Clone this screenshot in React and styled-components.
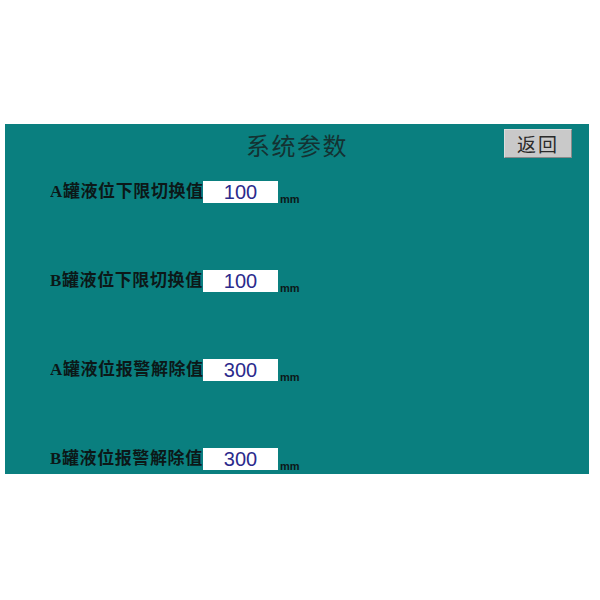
import React from "react";
import styled, { createGlobalStyle } from "styled-components";

const Global = createGlobalStyle`
  html, body { margin: 0; padding: 0; background: #ffffff; }
  body { font-family: "Liberation Serif", "Noto Sans CJK SC", serif; }
`;

const Panel = styled.div`
  margin: 124px 0 0 5px;
  width: 584px;
  height: 350px;
  background: #0a7f7f;
  box-sizing: border-box;
  display: flex;
  flex-direction: column;
`;

const Header = styled.div`
  display: grid;
  grid-template-columns: 1fr auto 1fr;
  align-items: start;
  height: 50px;
`;

const Title = styled.h1`
  grid-column: 2;
  margin: 5px 0 0 0;
  font-family: "Noto Sans CJK SC", sans-serif;
  font-weight: 400;
  font-size: 24px;
  line-height: 32px;
  letter-spacing: 1.5px;
  color: #143232;
`;

const BackButton = styled.button`
  grid-column: 3;
  justify-self: end;
  margin: 5px 17px 0 0;
  width: 68px;
  height: 29px;
  padding: 0;
  background: #c9c9c9;
  border: 1px solid #dcdcdc;
  border-bottom-color: #8a8a8a;
  border-right-color: #8a8a8a;
  font-family: "Noto Sans CJK SC", sans-serif;
  font-size: 19px;
  line-height: 27px;
  letter-spacing: 2px;
  color: #2a2a2a;
`;

const Rows = styled.div`
  display: flex;
  flex-direction: column;
  gap: 67px;
  padding: 7px 0 0 45px;
`;

const Row = styled.div`
  display: flex;
  align-items: flex-end;
  height: 22px;
`;

const Label = styled.span`
  font-family: "Liberation Serif", "Noto Sans CJK SC", serif;
  font-weight: 700;
  font-size: 17px;
  line-height: 22px;
  letter-spacing: 0.6px;
  color: #0c1818;
  width: 153px;
  white-space: nowrap;
  overflow: hidden;
`;

const ValueBox = styled.div`
  width: 75px;
  height: 22px;
  background: #ffffff;
  box-sizing: border-box;
  display: flex;
  align-items: center;
  justify-content: center;
  font-family: "Liberation Sans", sans-serif;
  font-size: 20px;
  line-height: 22px;
  color: #2b2a8c;
`;

const Unit = styled.span`
  margin-left: 2px;
  font-family: "Liberation Sans", sans-serif;
  font-weight: 700;
  font-size: 11px;
  line-height: 8px;
  color: #0c1818;
`;

const params = [
  { label: "A罐液位下限切换值", value: "100" },
  { label: "B罐液位下限切换值", value: "100" },
  { label: "A罐液位报警解除值", value: "300" },
  { label: "B罐液位报警解除值", value: "300" },
];

export default function App() {
  return (
    <>
      <Global />
      <Panel>
        <Header>
          <Title>系统参数</Title>
          <BackButton>返回</BackButton>
        </Header>
        <Rows>
          {params.map((p, i) => (
            <Row key={i}>
              <Label>{p.label}</Label>
              <ValueBox>{p.value}</ValueBox>
              <Unit>mm</Unit>
            </Row>
          ))}
        </Rows>
      </Panel>
    </>
  );
}
